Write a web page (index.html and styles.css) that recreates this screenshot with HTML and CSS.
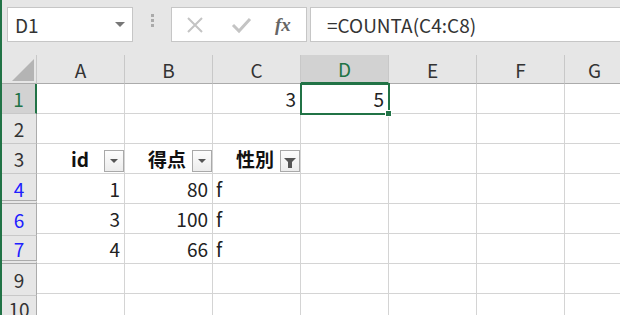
FILE: index.html
```html
<!DOCTYPE html>
<html lang="ja">
<head>
  <meta charset="UTF-8">
  <meta name="viewport" content="width=device-width, initial-scale=1.0">
  <title>COUNTA</title>
  <link rel="stylesheet" href="styles.css">
</head>
<body>

  <div class="app">
    <!-- 数式バー -->
    <div class="toolbar">
      <div class="name-box">
        <span>D1</span>
        <span class="caret"></span>
      </div>
      <div class="grip"><i></i><i></i><i></i></div>
      <div class="fx-buttons">
        <svg class="btn-x" width="18" height="18" viewBox="0 0 18 18"><path d="M2 2 L16 16 M16 2 L2 16" stroke="#c4c4c4" stroke-width="2" fill="none"/></svg>
        <svg class="btn-ok" width="22" height="20" viewBox="0 0 22 20"><path d="M3 10 L9 16 L20 4" stroke="#c4c4c4" stroke-width="3" fill="none"/></svg>
        <span class="fx">fx</span>
      </div>
      <div class="formula">=COUNTA(C4:C8)</div>
    </div>

    <!-- シート -->
    <div class="sheet">
      <div class="corner"><span class="tri"></span></div>
      <div class="col-head">A</div>
      <div class="col-head">B</div>
      <div class="col-head">C</div>
      <div class="col-head active">D</div>
      <div class="col-head">E</div>
      <div class="col-head">F</div>
      <div class="col-head">G</div>

      <div class="row-head active">1</div>
      <div class="cell"></div>
      <div class="cell"></div>
      <div class="cell num">3</div>
      <div class="cell num selected">5<span class="handle"></span></div>
      <div class="cell"></div>
      <div class="cell"></div>
      <div class="cell"></div>

      <div class="row-head">2</div>
      <div class="cell"></div>
      <div class="cell"></div>
      <div class="cell"></div>
      <div class="cell"></div>
      <div class="cell"></div>
      <div class="cell"></div>
      <div class="cell"></div>

      <div class="row-head">3</div>
      <div class="cell head"><b class="id">id</b><span class="filter"><span class="arrow"></span></span></div>
      <div class="cell head"><b>得点</b><span class="filter"><span class="arrow"></span></span></div>
      <div class="cell head"><b>性別</b><span class="filter"><span class="funnel"></span></span></div>
      <div class="cell"></div>
      <div class="cell"></div>
      <div class="cell"></div>
      <div class="cell"></div>

      <div class="row-head filtered">4</div>
      <div class="cell num">1</div>
      <div class="cell num">80</div>
      <div class="cell">f</div>
      <div class="cell"></div>
      <div class="cell"></div>
      <div class="cell"></div>
      <div class="cell"></div>

      <div class="row-head filtered hidden-above">6</div>
      <div class="cell num">3</div>
      <div class="cell num">100</div>
      <div class="cell">f</div>
      <div class="cell"></div>
      <div class="cell"></div>
      <div class="cell"></div>
      <div class="cell"></div>

      <div class="row-head filtered">7</div>
      <div class="cell num">4</div>
      <div class="cell num">66</div>
      <div class="cell">f</div>
      <div class="cell"></div>
      <div class="cell"></div>
      <div class="cell"></div>
      <div class="cell"></div>

      <div class="row-head hidden-above">9</div>
      <div class="cell"></div>
      <div class="cell"></div>
      <div class="cell"></div>
      <div class="cell"></div>
      <div class="cell"></div>
      <div class="cell"></div>
      <div class="cell"></div>

      <div class="row-head">10</div>
      <div class="cell"></div>
      <div class="cell"></div>
      <div class="cell"></div>
      <div class="cell"></div>
      <div class="cell"></div>
      <div class="cell"></div>
      <div class="cell"></div>
    </div>
  </div>

</body>
</html>
```

FILE: styles.css
```css
body {
  margin: 0;
  padding: 0;
  font-family: "Noto Sans CJK JP", "Noto Sans", sans-serif;
  font-size: 19px;
  color: #222;
  overflow: hidden;
}
.app {
  width: 620px;
  height: 315px;
  background-color: #e6e6e6;
  border-left: 2px solid #217346;
  box-sizing: border-box;
  overflow: hidden;
}
.toolbar {
  display: flex;
  align-items: center;
  height: 35px;
  padding: 7px 0 13px 5px;
}
.name-box {
  width: 110px;
  height: 33px;
  background-color: #ffffff;
  border: 1px solid #c6c6c6;
  display: flex;
  align-items: center;
  justify-content: space-between;
  padding: 0 7px 0 7px;
  color: #333;
}
.caret {
  width: 0;
  height: 0;
  border-left: 5px solid transparent;
  border-right: 5px solid transparent;
  border-top: 5px solid #777;
}
.grip {
  width: 38px;
  display: flex;
  flex-direction: column;
  align-items: center;
  gap: 2px;
  margin-top: -8px;
}
.grip i {
  width: 3px;
  height: 3px;
  background-color: #aaa;
}
.fx-buttons {
  width: 136px;
  height: 35px;
  background-color: #ffffff;
  border: 1px solid #c6c6c6;
  display: flex;
  align-items: center;
  padding: 0 0 0 14px;
  box-sizing: border-box;
}
.btn-ok {
  margin-left: 26px;
}
.fx {
  margin-left: 23px;
  font-family: "Liberation Serif", serif;
  font-style: italic;
  font-weight: bold;
  font-size: 19px;
  color: #666;
}
.formula {
  flex: 1;
  height: 33px;
  margin-left: 3px;
  background-color: #ffffff;
  border: 1px solid #c6c6c6;
  border-right: none;
  display: flex;
  align-items: center;
  padding-left: 16px;
  color: #333;
}
.sheet {
  display: grid;
  grid-template-columns: 35px repeat(6, 88px) 60px;
  grid-auto-rows: 30px;
  grid-template-rows: 29px;
  background-color: #ffffff;
}
.corner {
  background-color: #e6e6e6;
  border-right: 1px solid #c8c8c8;
  border-bottom: 1px solid #ababab;
  position: relative;
}
.tri {
  position: absolute;
  right: 2px;
  bottom: 2px;
  width: 0;
  height: 0;
  border-left: 22px solid transparent;
  border-bottom: 22px solid #b4b4b4;
}
.col-head {
  background-color: #e6e6e6;
  border-right: 1px solid #c8c8c8;
  border-bottom: 1px solid #ababab;
  display: flex;
  align-items: center;
  justify-content: center;
  color: #333;
}
.col-head.active {
  background-color: #d2d2d2;
  color: #217346;
  border-bottom: 2px solid #217346;
}
.row-head {
  background-color: #e6e6e6;
  border-right: 1px solid #ababab;
  border-bottom: 1px solid #c8c8c8;
  display: flex;
  align-items: center;
  justify-content: center;
  color: #333;
}
.row-head.active {
  background-color: #d2d2d2;
  color: #217346;
  border-right: 2px solid #217346;
}
.row-head.filtered {
  color: #2020ff;
}
.row-head.hidden-above {
  border-top: 2px solid #e6e6e6;
  box-shadow: inset 0 1px 0 #ababab;
  margin-top: -3px;
  height: 32px;
  position: relative;
}
.row-head.hidden-above::before {
  content: "";
  position: absolute;
  left: 0;
  right: 0;
  top: -3px;
  border-top: 1px solid #ababab;
}
.cell {
  border-right: 1px solid #d4d4d4;
  border-bottom: 1px solid #d4d4d4;
  display: flex;
  align-items: center;
  padding: 0 4px 0 3px;
  color: #222;
  position: relative;
}
.cell.num {
  justify-content: flex-end;
}
.cell.head {
  justify-content: flex-end;
  padding-right: 0;
}
.cell.head b {
  margin-right: 6px;
  color: #111;
}
.cell.head b.id {
  margin-right: 15px;
}
.filter {
  width: 18px;
  height: 20px;
  border: 1px solid #a9a9a9;
  background: linear-gradient(#fdfdfd, #ececec);
  display: flex;
  align-items: center;
  justify-content: center;
  margin-top: 4px;
}
.arrow {
  width: 0;
  height: 0;
  border-left: 4px solid transparent;
  border-right: 4px solid transparent;
  border-top: 4px solid #555;
}
.funnel {
  width: 0;
  height: 0;
  border-left: 6px solid transparent;
  border-right: 6px solid transparent;
  border-top: 6px solid #555;
  position: relative;
}
.funnel::after {
  content: "";
  position: absolute;
  left: -2px;
  top: -2px;
  width: 4px;
  height: 6px;
  background-color: #555;
}
.selected {
  outline: 2px solid #217346;
  outline-offset: -1px;
  z-index: 2;
}
.handle {
  position: absolute;
  right: -4px;
  bottom: -4px;
  width: 5px;
  height: 5px;
  background-color: #217346;
  border: 1px solid #ffffff;
}
```
